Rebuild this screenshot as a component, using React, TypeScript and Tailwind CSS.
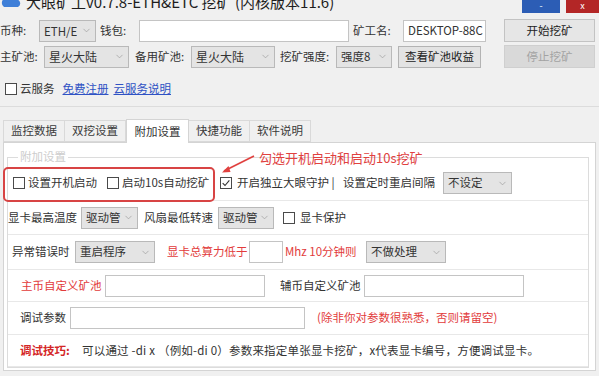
import { ChevronDown } from "lucide-react";

function Select({ label, className, clip }: { label: string; className: string; clip?: boolean }) {
  return (
    <div
      className={`flex items-center justify-between shrink-0 border border-[#b9b9b9] bg-[#e4e4e4] pl-[4px] pr-[3px] text-[#333] ${className}`}
    >
      <span className={clip ? "whitespace-nowrap overflow-hidden leading-[14px]" : "whitespace-nowrap"}>{label}</span>
      <ChevronDown className="w-[11px] h-[11px] text-[#9a9a9a] shrink-0" strokeWidth={1.5} />
    </div>
  );
}

function Check({ checked, className = "" }: { checked?: boolean; className?: string }) {
  return (
    <span
      className={`w-[12px] h-[12px] border border-[#4a4a4a] bg-white shrink-0 flex items-center justify-center ${className}`}
    >
      {checked && (
        <svg viewBox="0 0 12 12" className="w-[10px] h-[10px]">
          <path d="M2 6.2 L4.8 9 L10 2.8" fill="none" stroke="#333" strokeWidth="1.3" />
        </svg>
      )}
    </span>
  );
}

const tabs = ["监控数据", "双挖设置", "附加设置", "快捷功能", "软件说明"];

export default function App() {
  return (
    <div className="relative w-[599px] h-[376px] overflow-hidden bg-[#f0f0f0] text-[11.5px] leading-none text-[#333] font-['Noto_Sans_CJK_SC','Noto_Sans',sans-serif]">
      {/* title bar */}
      <div className="flex h-[15px] items-start">
        <svg viewBox="0 0 22 16" className="w-[22px] h-[16px] -mt-[8px] shrink-0">
          <path d="M4 15 a5 5 0 0 1 2-9 a6 6 0 0 1 11 1.5 a4 4 0 0 1 1 7.5 z" fill="#3f7fd8" />
        </svg>
        <div className="ml-[4px] -mt-[6px] text-[15px] text-[#1e1e1e] whitespace-nowrap">
          大眼矿工v0.7.8-ETH&amp;ETC 挖矿 (内核版本11.6)
        </div>
        <div className="ml-auto flex gap-[6px]">
          <div className="w-[38px] h-[13px] bg-[#2c5db5] flex items-end justify-center text-white text-[9px] pb-[3px]">-</div>
          <div className="w-[33px] h-[13px] bg-[#b32626] flex items-end justify-center text-white text-[9px] pb-[3px]">x</div>
        </div>
      </div>

      {/* row 1 */}
      <div className="mt-[4px] h-[23px] flex items-center">
        <span className="w-[39px] shrink-0">币种:</span>
        <Select label="ETH/E" clip className="w-[57px] h-[22px]" />
        <span className="ml-[4px] w-[39px] shrink-0">钱包:</span>
        <div className="w-[210px] h-[22px] border border-[#c4c4c4] bg-white shrink-0" />
        <span className="ml-[4px] w-[50px] shrink-0">矿工名:</span>
        <div className="w-[83px] h-[22px] border border-[#c4c4c4] bg-white shrink-0 flex items-center pl-[4px] overflow-hidden whitespace-nowrap">
          DESKTOP-88C
        </div>
        <button className="ml-[18px] w-[91px] h-[23px] border border-[#c3c3c3] bg-[#e6e6e6] text-[#222] shrink-0">
          开始挖矿
        </button>
      </div>

      {/* row 2 */}
      <div className="mt-[3px] h-[23px] flex items-center">
        <span className="w-[44px] shrink-0">主矿池:</span>
        <Select label="星火大陆" className="w-[85px] h-[22px] text-[12px]" />
        <span className="ml-[6px] w-[56px] shrink-0">备用矿池:</span>
        <Select label="星火大陆" className="w-[84px] h-[22px] text-[12px]" />
        <span className="ml-[5px] w-[56px] shrink-0">挖矿强度:</span>
        <Select label="强度8" className="w-[56px] h-[22px]" />
        <button className="ml-[6px] w-[83px] h-[22px] border border-[#b3b3b3] bg-[#e3e3e3] text-[#222] shrink-0">
          查看矿池收益
        </button>
        <button className="ml-[23px] w-[91px] h-[23px] border border-[#cfcfcf] bg-[#d9d9d9] text-[#a3a3a3] shrink-0">
          停止挖矿
        </button>
      </div>

      {/* row 3 */}
      <div className="mt-[12px] h-[18px] flex items-center">
        <Check className="ml-[5px]" />
        <span className="ml-[3px]">云服务</span>
        <span className="ml-[8px] text-[#2f52c4] underline">免费注册</span>
        <span className="ml-[5px] text-[#2f52c4] underline">云服务说明</span>
      </div>

      <div className="mt-[8px] h-px bg-[#dcdcdc]" />

      {/* tabs */}
      <div className="mt-[11px] h-[24px] flex items-end pl-[3px]">
        {tabs.map((t, i) =>
          i === 2 ? (
            <div
              key={t}
              className="w-[63px] h-[24px] bg-white border border-b-0 border-[#d4d4d4] flex items-center justify-center relative z-10 -mb-px"
            >
              {t}
            </div>
          ) : (
            <div
              key={t}
              className="w-[62px] h-[22px] bg-[#f0f0f0] border border-[#d9d9d9] -ml-px first:ml-0 flex items-center justify-center text-[#3a3a3a]"
            >
              {t}
            </div>
          )
        )}
      </div>

      {/* panel */}
      <div className="relative ml-[3px] w-[593px] h-[229px] bg-white border border-[#d4d4d4]">
        <div className="relative mt-[14px] ml-[3px] w-[582px] h-[211px] border border-[#dcdcdc]">
          <span className="absolute -top-[7px] left-[10px] bg-white px-[2px] text-[#cdcdcd]">附加设置</span>

          <div className="mt-[8px] h-[35px] flex items-center border-b border-[#e8e8e8]">
            <Check className="ml-[5px]" />
            <span className="ml-[3px] w-[79px] shrink-0">设置开机启动</span>
            <Check />
            <span className="ml-[3px] w-[98px] shrink-0">启动10s自动挖矿</span>
            <Check checked />
            <span className="ml-[5px] w-[106px] shrink-0 whitespace-nowrap">开启独立大眼守护 |</span>
            <span className="w-[100px] shrink-0 whitespace-nowrap">设置定时重启间隔</span>
            <Select label="不设定" className="w-[69px] h-[22px]" />
          </div>

          <div className="h-[34px] flex items-center border-b border-[#e8e8e8]">
            <span className="w-[73px] shrink-0">显卡最高温度</span>
            <Select label="驱动管" className="w-[57px] h-[22px]" />
            <span className="ml-[6px] w-[74px] shrink-0">风扇最低转速</span>
            <Select label="驱动管" className="w-[56px] h-[22px]" />
            <Check className="ml-[9px]" />
            <span className="ml-[5px]">显卡保护</span>
          </div>

          <div className="h-[35px] flex items-center border-b border-[#e8e8e8]">
            <span className="ml-[4px] w-[63px] shrink-0">异常错误时</span>
            <Select label="重启程序" className="w-[80px] h-[22px]" />
            <span className="ml-[12px] w-[82px] shrink-0 text-[#e23b3b]">显卡总算力低于</span>
            <div className="w-[34px] h-[22px] border border-[#c4c4c4] bg-white shrink-0" />
            <span className="ml-[2px] w-[81px] shrink-0 text-[#e23b3b] whitespace-nowrap">Mhz 10分钟则</span>
            <Select label="不做处理" className="w-[80px] h-[22px]" />
          </div>

          <div className="h-[32px] flex items-center border-b border-[#e8e8e8]">
            <span className="ml-[13px] w-[84px] shrink-0 text-[#e23b3b]">主币自定义矿池</span>
            <div className="w-[160px] h-[22px] border border-[#c4c4c4] bg-white shrink-0" />
            <span className="ml-[15px] w-[84px] shrink-0">辅币自定义矿池</span>
            <div className="w-[160px] h-[22px] border border-[#c4c4c4] bg-white shrink-0" />
          </div>

          <div className="h-[33px] flex items-center border-b border-[#e8e8e8]">
            <span className="ml-[12px] w-[50px] shrink-0">调试参数</span>
            <div className="w-[235px] h-[22px] border border-[#c4c4c4] bg-white shrink-0" />
            <span className="ml-[12px] text-[#e23b3b] whitespace-nowrap">(除非你对参数很熟悉，否则请留空)</span>
          </div>

          <div className="h-[32px] flex items-center border-b border-[#e8e8e8]">
            <span className="ml-[12px] w-[62px] shrink-0 text-[#d42626] font-bold">调试技巧:</span>
            <span className="whitespace-nowrap tracking-[0.2px]">
              可以通过 -di x （例如-di 0）参数来指定单张显卡挖矿，x代表显卡编号，方便调试显卡。
            </span>
          </div>
        </div>
      </div>

      {/* annotation overlay */}
      <div className="absolute left-[3px] top-[167px] w-[212px] h-[35px] border-2 border-[#d84444] rounded-[5px]" />
      <div className="absolute left-[259px] top-[151px] text-[13px] text-[#e0413f] whitespace-nowrap">
        勾选开机启动和启动10s挖矿
      </div>
      <svg className="absolute left-[218px] top-[152px] w-[40px] h-[26px]" viewBox="0 0 40 26">
        <path d="M36 4 L6 19" stroke="#e0413f" strokeWidth="1.6" fill="none" />
        <path d="M4 20.5 L10.5 14 L12.5 20 Z" fill="#e0413f" />
      </svg>
    </div>
  );
}
